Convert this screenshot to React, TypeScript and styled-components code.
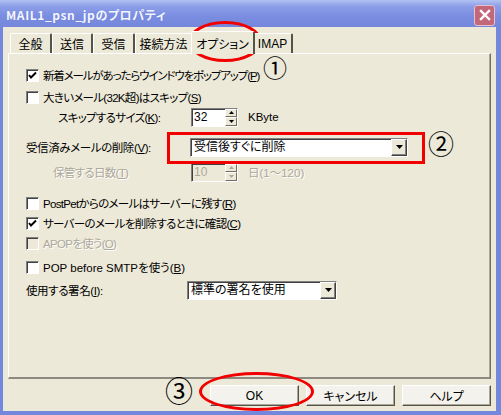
import styled, { createGlobalStyle } from "styled-components";

const UI_FONT = `"Liberation Sans", "Noto Sans CJK JP", sans-serif`;
const CJK_FONT = `"Noto Sans CJK JP", "Liberation Sans", sans-serif`;

const GlobalStyle = createGlobalStyle`
  html, body {
    margin: 0;
    padding: 0;
    background: #fff;
  }
  body {
    font-family: ${UI_FONT};
  }
`;

export default function App() {
  return (
    <>
      <GlobalStyle />
      <Window>
        <TitleBar>
          <Title>MAIL1_psn_jpのプロパティ</Title>
          <CloseButton>
            <svg width="12" height="12" viewBox="0 0 12 12">
              <path d="M2 2 L10 10 M10 2 L2 10" stroke="#fff" strokeWidth="2.4" strokeLinecap="square" />
            </svg>
          </CloseButton>
        </TitleBar>
        <Frame>
          <Body>
            <TabRow>
              <Tab $width={42}>全般</Tab>
              <Tab $width={41}>送信</Tab>
              <Tab $width={42}>受信</Tab>
              <Tab $width={58}>接続方法</Tab>
              <Tab $width={64} $active>オプション</Tab>
              <Tab $width={40}>IMAP</Tab>
            </TabRow>
            <Panel>
              <Row $gap={0}>
                <CheckBox checked />
                <Text $spacing={-1.15}>新着メールがあったらウインドウをポップアップ(<u>P</u>)</Text>
              </Row>
              <Row $gap={2}>
                <CheckBox />
                <Text>大きいメール(32K超)はスキップ(<u>S</u>)</Text>
              </Row>
              <Row $gap={0} $indent={32}>
                <FieldLabel $width={133}>スキップするサイズ(<u>K</u>):</FieldLabel>
                <Spinner value="32" />
                <Suffix>KByte</Suffix>
              </Row>
              <Row $gap={10}>
                <FieldLabel $width={164} $spacing={-0.4}>受信済みメールの削除(<u>V</u>):</FieldLabel>
                <Combo value="受信後すぐに削除" width={218} />
              </Row>
              <Row $gap={5} $indent={27}>
                <FieldLabel $width={138} $disabled>保管する日数(<u>T</u>)</FieldLabel>
                <Spinner value="10" disabled />
                <Suffix $disabled>日(1〜120)</Suffix>
              </Row>
              <Row $gap={11}>
                <CheckBox />
                <Text>PostPetからのメールはサーバーに残す(<u>R</u>)</Text>
              </Row>
              <Row $gap={0}>
                <CheckBox checked />
                <Text>サーバーのメールを削除するときに確認(<u>C</u>)</Text>
              </Row>
              <Row $gap={0}>
                <CheckBox disabled />
                <Text $disabled>APOPを使う(<u>O</u>)</Text>
              </Row>
              <Row $gap={4}>
                <CheckBox />
                <Text $spacing={0}>POP before SMTPを使う(<u>B</u>)</Text>
              </Row>
              <Row $gap={3}>
                <FieldLabel $width={161} $spacing={-0.4}>使用する署名(<u>I</u>):</FieldLabel>
                <Combo value="標準の署名を使用" width={150} />
              </Row>
            </Panel>
            <ButtonRow>
              <PushButton>OK</PushButton>
              <PushButton>キャンセル</PushButton>
              <PushButton>ヘルプ</PushButton>
            </ButtonRow>
          </Body>
        </Frame>

        <Oval $left={188} $top={21} $w={74} $h={41} />
        <Mark $left={263} $top={55} $size={24}>①</Mark>
        <RedBox />
        <Mark $left={428} $top={130} $size={26}>②</Mark>
        <Oval $left={199} $top={372} $w={115} $h={39} />
        <Mark $left={165} $top={376} $size={28}>③</Mark>
      </Window>
    </>
  );
}

function CheckBox({ checked, disabled }: { checked?: boolean; disabled?: boolean }) {
  return (
    <Box $disabled={disabled}>
      {checked && (
        <svg width="9" height="9" viewBox="0 0 9 9">
          <path d="M1 4 L3 6.5 L8 1.5" fill="none" stroke={disabled ? "#aca899" : "#000"} strokeWidth="2" />
        </svg>
      )}
    </Box>
  );
}

function Spinner({ value, disabled }: { value: string; disabled?: boolean }) {
  return (
    <SpinFrame>
      <SpinField $disabled={disabled}>{value}</SpinField>
      <SpinButtons>
        <SpinArrow>
          <svg width="5" height="3" viewBox="0 0 5 3">
            <path d="M2.5 0 L5 3 L0 3 Z" fill={disabled ? "#aca899" : "#000"} />
          </svg>
        </SpinArrow>
        <SpinArrow>
          <svg width="5" height="3" viewBox="0 0 5 3">
            <path d="M0 0 L5 0 L2.5 3 Z" fill={disabled ? "#aca899" : "#000"} />
          </svg>
        </SpinArrow>
      </SpinButtons>
    </SpinFrame>
  );
}

function Combo({ value, width }: { value: string; width: number }) {
  return (
    <ComboFrame style={{ width }}>
      <ComboText>{value}</ComboText>
      <DropButton>
        <svg width="7" height="4" viewBox="0 0 7 4">
          <path d="M0 0 L7 0 L3.5 4 Z" fill="#000" />
        </svg>
      </DropButton>
    </ComboFrame>
  );
}

const Window = styled.div`
  position: relative;
  width: 501px;
  height: 415px;
  display: flex;
  flex-direction: column;
  background: #7387dc;
  overflow: hidden;
`;

const TitleBar = styled.div`
  height: 27px;
  flex: 0 0 27px;
  display: flex;
  align-items: center;
  justify-content: space-between;
  padding: 0 6px 0 6px;
  box-sizing: border-box;
  background: linear-gradient(180deg, #b4c2f3 0%, #8d9fe8 22%, #7a8de0 60%, #7487dc 100%);
`;

const Title = styled.div`
  color: #f4f6ff;
  font-family: ${CJK_FONT};
  font-size: 12px;
  font-weight: 700;
  letter-spacing: 0.6px;
  font-feature-settings: "palt";
  text-shadow: 0 0 1px #6a7cd0;
  padding-top: 2px;
`;

const CloseButton = styled.div`
  width: 19px;
  height: 19px;
  margin-top: 3px;
  display: flex;
  align-items: center;
  justify-content: center;
  background: #c2687a;
  border: 1px solid #e6c3cc;
  border-radius: 3px;
`;

const Frame = styled.div`
  flex: 1;
  display: flex;
  padding: 0 5px 4px 3px;
`;

const Body = styled.div`
  flex: 1;
  display: flex;
  flex-direction: column;
  padding: 6px 5px 5px 5px;
  background: #ece9d8;
`;

const TabRow = styled.div`
  display: flex;
  align-items: flex-end;
  height: 20px;
  padding-left: 2px;
`;

const Tab = styled.div<{ $active?: boolean; $width: number }>`
  position: relative;
  z-index: ${({ $active }) => ($active ? 2 : 1)};
  width: ${({ $width }) => $width}px;
  height: ${({ $active }) => ($active ? "23px" : "20px")};
  margin: ${({ $active }) => ($active ? "0 -2px -1px -2px" : "0")};
  box-sizing: border-box;
  display: flex;
  align-items: center;
  justify-content: center;
  font-family: ${UI_FONT};
  font-size: 12px;
  font-feature-settings: "palt";
  color: #000;
  background: #ece9d8;
  border-top: 1px solid #fff;
  border-left: 1px solid #fff;
  border-right: 2px solid #555349;
  border-radius: 2px 2px 0 0;
`;

const Panel = styled.div`
  flex: 1;
  display: flex;
  flex-direction: column;
  padding: 11px 0 0 17px;
  border-top: 1px solid #fff;
  border-left: 1px solid #fff;
  border-right: 1px solid #716f64;
  border-bottom: 2px solid #8c8a80;
  box-shadow: inset -1px 0 0 #aca899;
`;

const Row = styled.div<{ $gap: number; $indent?: number }>`
  display: flex;
  align-items: center;
  height: 20px;
  margin-top: ${({ $gap }) => $gap}px;
  padding-left: ${({ $indent }) => $indent ?? 0}px;
`;

const Text = styled.span<{ $disabled?: boolean; $spacing?: number }>`
  font-family: ${UI_FONT};
  font-size: 11.5px;
  letter-spacing: ${({ $spacing }) => $spacing ?? -0.7}px;
  font-feature-settings: "palt";
  white-space: nowrap;
  color: ${({ $disabled }) => ($disabled ? "#aca899" : "#000")};
  text-shadow: ${({ $disabled }) => ($disabled ? "1px 1px 0 #fff" : "none")};

  u {
    text-decoration-thickness: 1px;
    text-underline-offset: 1px;
  }
`;

const FieldLabel = styled(Text)<{ $width: number }>`
  flex: 0 0 ${({ $width }) => $width}px;
`;

const Suffix = styled(Text)`
  margin-left: 10px;
  letter-spacing: 0;
`;

const Box = styled.div<{ $disabled?: boolean }>`
  width: 13px;
  height: 13px;
  box-sizing: border-box;
  margin-right: 4px;
  display: flex;
  align-items: center;
  justify-content: center;
  background: ${({ $disabled }) => ($disabled ? "#ece9d8" : "#fff")};
  border-top: 1px solid #808080;
  border-left: 1px solid #808080;
  border-right: 1px solid #fff;
  border-bottom: 1px solid #fff;
  box-shadow: inset 1px 1px 0 #404040;
`;

const SpinFrame = styled.div`
  width: 47px;
  height: 19px;
  display: flex;
  box-sizing: border-box;
  border-top: 1px solid #808080;
  border-left: 1px solid #808080;
  border-right: 1px solid #fff;
  border-bottom: 1px solid #fff;
`;

const SpinField = styled.div<{ $disabled?: boolean }>`
  flex: 1;
  padding-left: 2px;
  font-family: ${UI_FONT};
  font-size: 12px;
  line-height: 17px;
  color: ${({ $disabled }) => ($disabled ? "#aca899" : "#000")};
  background: ${({ $disabled }) => ($disabled ? "#ece9d8" : "#fff")};
  box-shadow: inset 1px 1px 0 #404040;
`;

const SpinButtons = styled.div`
  width: 12px;
  display: flex;
  flex-direction: column;
  background: #fff;
`;

const SpinArrow = styled.div`
  flex: 1;
  display: flex;
  align-items: center;
  justify-content: center;
  background: #ece9d8;
  box-sizing: border-box;
  border-top: 1px solid #fff;
  border-left: 1px solid #fff;
  border-right: 1px solid #716f64;
  border-bottom: 1px solid #716f64;
`;

const ComboFrame = styled.div`
  height: 19px;
  display: flex;
  box-sizing: border-box;
  background: #fff;
  border-top: 1px solid #808080;
  border-left: 1px solid #808080;
  border-right: 1px solid #fff;
  border-bottom: 1px solid #fff;
  box-shadow: inset 1px 1px 0 #404040;
`;

const ComboText = styled.div`
  flex: 1;
  padding-left: 3px;
  font-family: ${UI_FONT};
  font-size: 12px;
  font-feature-settings: "palt";
  line-height: 17px;
  color: #000;
  white-space: nowrap;
`;

const DropButton = styled.div`
  width: 16px;
  display: flex;
  align-items: center;
  justify-content: center;
  background: #ece9d8;
  box-sizing: border-box;
  border-top: 1px solid #fff;
  border-left: 1px solid #fff;
  border-right: 1px solid #404040;
  border-bottom: 1px solid #404040;
  box-shadow: inset -1px -1px 0 #808080;
`;

const ButtonRow = styled.div`
  display: flex;
  justify-content: flex-end;
  gap: 7px;
  margin-top: 6px;
  height: 21px;
`;

const PushButton = styled.div`
  width: 89px;
  height: 21px;
  box-sizing: border-box;
  display: flex;
  align-items: center;
  justify-content: center;
  font-family: ${UI_FONT};
  font-size: 12px;
  font-feature-settings: "palt";
  color: #000;
  background: #f3f2ec;
  border-top: 1px solid #fff;
  border-left: 1px solid #fff;
  border-right: 1px solid #555349;
  border-bottom: 1px solid #555349;
  box-shadow: inset -1px -1px 0 #aca899;
`;

const Oval = styled.div<{ $left: number; $top: number; $w: number; $h: number }>`
  position: absolute;
  left: ${({ $left }) => $left}px;
  top: ${({ $top }) => $top}px;
  width: ${({ $w }) => $w}px;
  height: ${({ $h }) => $h}px;
  box-sizing: border-box;
  border: 3px solid #f20000;
  border-radius: 50%;
  pointer-events: none;
`;

const RedBox = styled.div`
  position: absolute;
  left: 167px;
  top: 132px;
  width: 258px;
  height: 32px;
  box-sizing: border-box;
  border: 3px solid #f20000;
`;

const Mark = styled.div<{ $left: number; $top: number; $size: number }>`
  position: absolute;
  left: ${({ $left }) => $left}px;
  top: ${({ $top }) => $top}px;
  height: ${({ $size }) => $size}px;
  font-family: ${CJK_FONT};
  font-size: ${({ $size }) => $size}px;
  line-height: 1;
  color: #000;
`;
